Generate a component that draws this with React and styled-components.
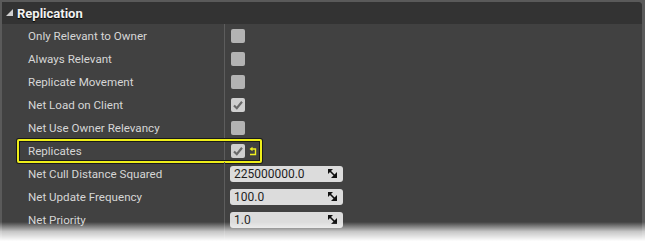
import React from "react";
import styled, { createGlobalStyle } from "styled-components";

const GlobalStyle = createGlobalStyle`
  html, body {
    margin: 0;
    padding: 0;
    background: #ffffff;
  }
  body {
    font-family: Roboto, "Liberation Sans", Arial, sans-serif;
  }
`;

const Shot = styled.div`
  position: relative;
  width: 645px;
  height: 246px;
  overflow: hidden;
  background: #ffffff;
`;

const Frame = styled.div`
  background: #5a5a5a;
  padding: 2px 3px 0 2px;
  height: 100%;
  box-sizing: border-box;
`;

const Panel = styled.div`
  background: #414141;
  height: 100%;
  border-top-right-radius: 4px;
  overflow: hidden;
`;

const Header = styled.div`
  display: flex;
  align-items: center;
  gap: 3px;
  height: 22px;
  padding-left: 4px;
  background: #333333;
  color: #f2f2f2;
  font-size: 13px;
  font-weight: bold;
  text-shadow: 0 1px 1px #000;
`;

const Row = styled.div`
  position: relative;
  display: grid;
  grid-template-columns: 222px 1px 1fr;
  height: 23px;
  align-items: center;

  ${(p) =>
    p.$highlight &&
    `
    &::after {
      content: "";
      position: absolute;
      left: 15px;
      top: 0;
      width: 245px;
      height: 24px;
      box-sizing: border-box;
      border: 2px solid #eeee1a;
      border-radius: 2px;
      box-shadow: 0 0 0 1px #1a1a1a, inset 0 0 0 1px #1a1a1a;
      pointer-events: none;
    }
  `}
`;

const Label = styled.div`
  padding-left: 26px;
  color: #d6d6d6;
  font-size: 11.6px;
  white-space: nowrap;
`;

const Divider = styled.div`
  align-self: stretch;
  background: #5d5d5d;
`;

const Value = styled.div`
  display: flex;
  align-items: center;
  gap: 4px;
  padding-left: 6px;
`;

const Box = styled.div`
  width: 14px;
  height: 14px;
  border-radius: 2px;
  background: ${(p) => (p.$checked ? "#cfcfcf" : "#b3b3b3")};
  display: flex;
  align-items: center;
  justify-content: center;
`;

const Field = styled.div`
  display: flex;
  align-items: center;
  justify-content: space-between;
  width: 113px;
  height: 16px;
  box-sizing: border-box;
  padding: 0 6px 0 4px;
  margin-left: -1px;
  border-radius: 3px;
  background: #dcdcdc;
  color: #1e1e1e;
  font-size: 12px;
`;

const Fade = styled.div`
  position: absolute;
  left: 0;
  right: 0;
  bottom: 0;
  height: 24px;
  background: linear-gradient(
    to bottom,
    rgba(255, 255, 255, 0) 0%,
    rgba(255, 255, 255, 0.7) 40%,
    #ffffff 80%
  );
  pointer-events: none;
`;

const Triangle = () => (
  <svg width="8" height="8" viewBox="0 0 8 8">
    <polygon points="7,0 7,7 0,7" fill="#d0d0d0" />
  </svg>
);

const Check = () => (
  <svg width="12" height="12" viewBox="0 0 12 12">
    <path
      d="M2 6.5 L4.8 9.2 L10 2.8"
      fill="none"
      stroke="#6a6a6a"
      strokeWidth="2.2"
    />
  </svg>
);

const ResetIcon = () => (
  <svg width="8" height="10" viewBox="0 0 8 10">
    <path d="M3 3 H6.5 V8.5 H1" fill="none" stroke="#f0f020" strokeWidth="1.4" />
    <polygon points="0.5,3 3.5,0.8 3.5,5.2" fill="#f0f020" />
  </svg>
);

const SpinIcon = () => (
  <svg width="9" height="9" viewBox="0 0 9 9">
    <polygon points="0,0 5,0 0,5" fill="#111" />
    <polygon points="9,9 9,3 3,9" fill="#111" />
    <path d="M1 1 L8 8" stroke="#111" strokeWidth="1.6" />
  </svg>
);

const rows = [
  { label: "Only Relevant to Owner", type: "check", checked: false },
  { label: "Always Relevant", type: "check", checked: false },
  { label: "Replicate Movement", type: "check", checked: false },
  { label: "Net Load on Client", type: "check", checked: true },
  { label: "Net Use Owner Relevancy", type: "check", checked: false },
  { label: "Replicates", type: "check", checked: true, reset: true, highlight: true },
  { label: "Net Cull Distance Squared", type: "num", value: "225000000.0" },
  { label: "Net Update Frequency", type: "num", value: "100.0" },
  { label: "Net Priority", type: "num", value: "1.0" },
  { label: "", type: "none" },
];

const App = () => {
  return (
    <Shot>
      <GlobalStyle />
      <Frame>
        <Panel>
          <Header>
            <Triangle />
            Replication
          </Header>
          {rows.map((r, i) => (
            <Row key={i} $highlight={r.highlight}>
              <Label>{r.label}</Label>
              <Divider />
              <Value>
                {r.type === "check" && (
                  <Box $checked={r.checked}>{r.checked && <Check />}</Box>
                )}
                {r.reset && <ResetIcon />}
                {r.type === "num" && (
                  <Field>
                    {r.value}
                    <SpinIcon />
                  </Field>
                )}
              </Value>
            </Row>
          ))}
        </Panel>
      </Frame>
      <Fade />
    </Shot>
  );
};

export default App;
